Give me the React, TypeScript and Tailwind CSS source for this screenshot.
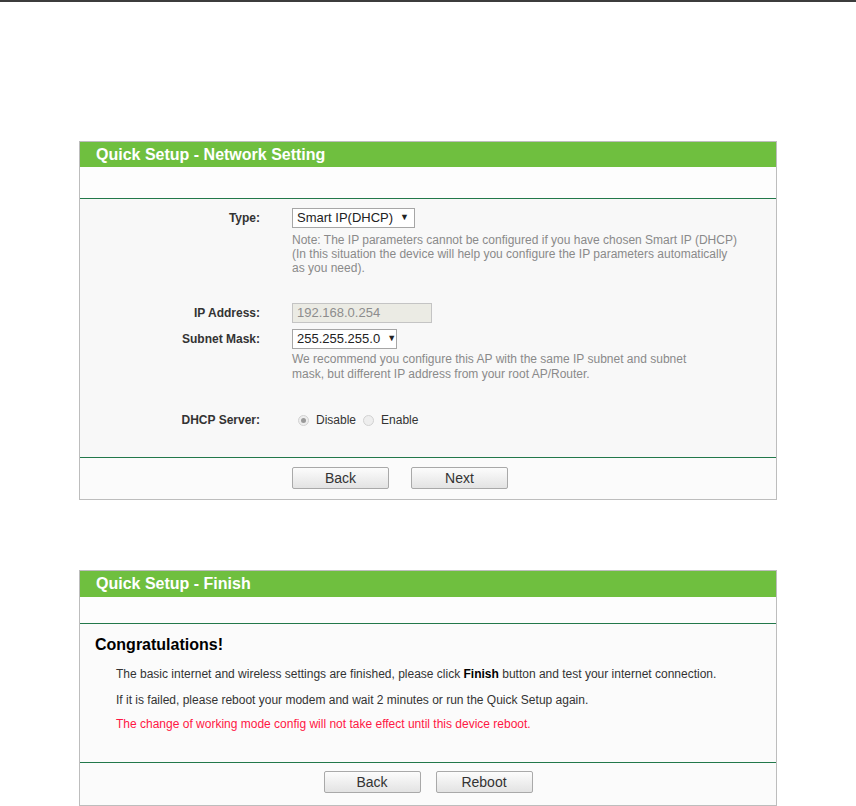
import React from "react";

const font = "font-['Liberation_Sans',Arial,sans-serif]";

function PanelHeader({ title, head, row }: { title: string; head: string; row: string }) {
  return (
    <>
      <div className={`${head} flex items-center bg-[#6fbf3f] pl-[16px] text-[16px] font-bold text-white`}>
        {title}
      </div>
      <div className={`${row} border-b border-[#22784a] bg-[#fdfdfd]`} />
    </>
  );
}

function Button({ label }: { label: string }) {
  return (
    <button className="h-[22px] w-[97px] rounded-[2px] border border-[#a9a9a9] bg-gradient-to-b from-[#fcfcfc] to-[#e3e3e3] text-[14px] leading-[20px] text-[#333]">
      {label}
    </button>
  );
}

function Select({ value, width }: { value: string; width: string }) {
  return (
    <div
      className={`flex h-[20px] items-center border border-[#a6a6a6] bg-white pl-[4px] text-[13px] text-[#222] ${width}`}
    >
      <span>{value}</span>
      <span className="ml-[7px] text-[9px]">▼</span>
    </div>
  );
}

function Label({ text }: { text: string }) {
  return (
    <div className="w-[180px] text-right text-[12px] font-bold text-[#333]">
      {text}
    </div>
  );
}

function Radio({ checked }: { checked?: boolean }) {
  return (
    <span className="flex h-[11px] w-[11px] items-center justify-center rounded-full border border-[#d2d2d2] bg-[#eeeeee]">
      {checked && <span className="h-[5px] w-[5px] rounded-full bg-[#9a9a9a]" />}
    </span>
  );
}

export default function App() {
  return (
    <div className={`min-h-[806px] bg-white ${font}`}>
      <div className="h-[2px] bg-[#3c3c3c]" />

      {/* Network setting */}
      <div className="mx-auto mt-[139px] w-[698px] border border-[#bdbdbd]">
        <PanelHeader title="Quick Setup - Network Setting" head="h-[25px]" row="h-[32px]" />
        <div className="bg-[#f8f8f8] pb-[27px] pt-[9px]">
          <div className="flex items-center">
            <Label text="Type:" />
            <div className="ml-[32px]">
              <Select value="Smart IP(DHCP)" width="w-[123px]" />
            </div>
          </div>
          <div className="ml-[212px] mt-[5px] w-[450px] text-[12px] leading-[14px] text-[#8a8a8a]">
            Note: The IP parameters cannot be configured if you have chosen Smart IP (DHCP)
            (In this situation the device will help you configure the IP parameters automatically
            as you need).
          </div>
          <div className="mt-[28px] flex items-center">
            <Label text="IP Address:" />
            <div className="ml-[32px] flex h-[20px] w-[140px] items-center border border-[#c4c4c4] bg-[#ebebe4] pl-[4px] text-[13px] text-[#8d8d8d]">
              192.168.0.254
            </div>
          </div>
          <div className="mt-[6px] flex items-center">
            <Label text="Subnet Mask:" />
            <div className="ml-[32px]">
              <Select value="255.255.255.0" width="w-[105px]" />
            </div>
          </div>
          <div className="ml-[212px] mt-[3px] w-[415px] text-[12px] leading-[15px] text-[#8a8a8a]">
            We recommend you configure this AP with the same IP subnet and subnet
            mask, but different IP address from your root AP/Router.
          </div>
          <div className="mt-[28px] flex h-[20px] items-center">
            <Label text="DHCP Server:" />
            <div className="ml-[38px] flex items-center text-[12px] text-[#333]">
              <Radio checked />
              <span className="ml-[7px]">Disable</span>
              <span className="ml-[7px]">
                <Radio />
              </span>
              <span className="ml-[7px]">Enable</span>
            </div>
          </div>
        </div>
        <div className="flex h-[42px] items-start gap-[22px] border-t border-[#22784a] bg-[#fbfbfb] pl-[212px] pt-[9px]">
          <Button label="Back" />
          <Button label="Next" />
        </div>
      </div>

      {/* Finish */}
      <div className="mx-auto mt-[70px] w-[698px] border border-[#bdbdbd]">
        <PanelHeader title="Quick Setup - Finish" head="h-[26px]" row="h-[27px]" />
        <div className="bg-[#fbfbfb] pb-[31px] pl-[15px] pt-[11px]">
          <div className="text-[16px] font-bold leading-[20px] text-black">Congratulations!</div>
          <div className="ml-[21px] mt-[12px] text-[12px] leading-[14px] text-[#333]">
            The basic internet and wireless settings are finished, please click{" "}
            <b className="text-black">Finish</b> button and test your internet connection.
          </div>
          <div className="ml-[21px] mt-[12px] text-[12px] leading-[14px] text-[#333]">
            If it is failed, please reboot your modem and wait 2 minutes or run the Quick Setup again.
          </div>
          <div className="ml-[21px] mt-[10px] text-[12px] leading-[14px] text-[#ff1744]">
            The change of working mode config will not take effect until this device reboot.
          </div>
        </div>
        <div className="flex h-[43px] items-start justify-center gap-[15px] border-t border-[#22784a] bg-[#fbfbfb] pt-[8px]">
          <Button label="Back" />
          <Button label="Reboot" />
        </div>
      </div>
    </div>
  );
}
